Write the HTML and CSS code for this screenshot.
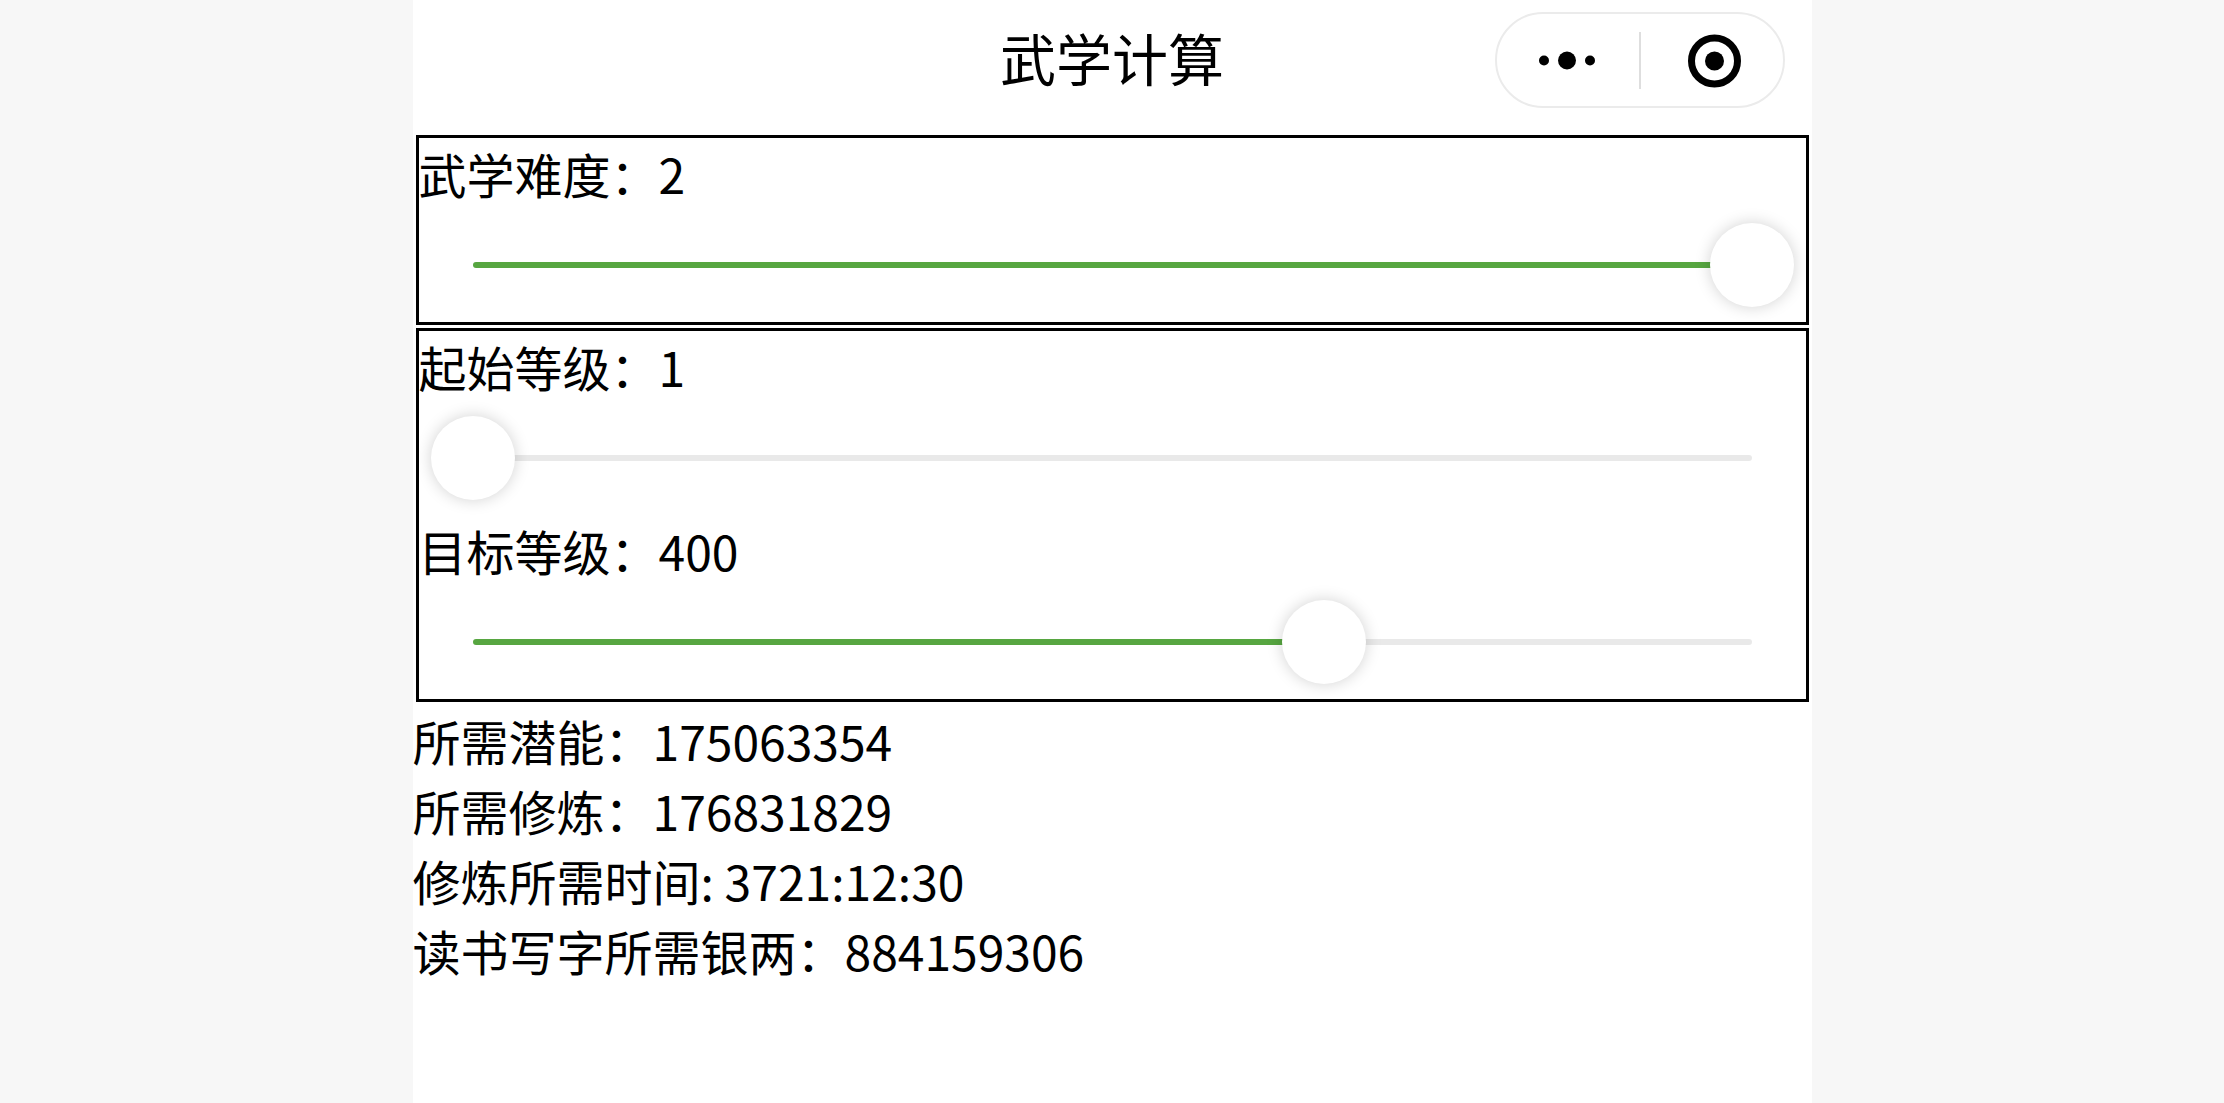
FILE: index.html
```html
<!DOCTYPE html>
<html lang="zh-CN">
<head>
    <meta charset="UTF-8">
    <meta name="viewport" content="width=device-width, initial-scale=1.0">
    <title>武学计算</title>
    <link rel="stylesheet" href="styles.css">
</head>
<body>
    <div class="page">
        <!-- 顶部导航 -->
        <header class="navbar">
            <h1 class="title">武学计算</h1>
            <div class="capsule">
                <button class="capsule-btn" type="button" aria-label="更多">
                    <svg width="60" height="60" viewBox="0 0 60 60">
                        <circle cx="6" cy="30.5" r="5"/>
                        <circle cx="29" cy="30.5" r="9"/>
                        <circle cx="52" cy="30.5" r="5"/>
                    </svg>
                </button>
                <span class="capsule-line"></span>
                <button class="capsule-btn" type="button" aria-label="关闭">
                    <svg width="60" height="60" viewBox="0 0 60 60">
                        <circle cx="32.5" cy="31" r="23" fill="none" stroke="#000" stroke-width="7"/>
                        <circle cx="32.5" cy="31" r="9.5"/>
                    </svg>
                </button>
            </div>
        </header>

        <!-- 武学难度 -->
        <section class="box">
            <label class="row" for="difficulty">武学难度：<span>2</span></label>
            <div class="slider" style="--fill: 100%">
                <input type="range" id="difficulty" min="0" max="2" value="2">
            </div>
        </section>

        <!-- 等级 -->
        <section class="box">
            <label class="row" for="start">起始等级：<span>1</span></label>
            <div class="slider" style="--fill: 0%">
                <input type="range" id="start" min="1" max="600" value="1">
            </div>
            <label class="row" for="target">目标等级：<span>400</span></label>
            <div class="slider" style="--fill: 66.6%">
                <input type="range" id="target" min="1" max="600" value="400">
            </div>
        </section>

        <!-- 计算结果 -->
        <section class="result">
            <div class="row">所需潜能：175063354</div>
            <div class="row">所需修炼：176831829</div>
            <div class="row">修炼所需时间: 3721:12:30</div>
            <div class="row">读书写字所需银两：884159306</div>
        </section>
    </div>

    <script>
        // 拖动时更新数值和进度
        document.querySelectorAll('.slider input').forEach(input => {
            input.addEventListener('input', () => {
                const percent = (input.value - input.min) / (input.max - input.min) * 100;
                input.parentNode.style.setProperty('--fill', percent + '%');
                input.labels[0].querySelector('span').textContent = input.value;
            });
        });
    </script>
</body>
</html>
```

FILE: styles.css
```css
* {
    box-sizing: border-box;
}

body {
    margin: 0;
    background: #f7f7f7;
    color: #000;
    font-family: "Noto Sans CJK SC", sans-serif;
    font-size: 48px;
    line-height: 70px;
}

.page {
    display: flex;
    flex-direction: column;
    gap: 3px;
    max-width: 1399px;
    min-height: 100vh;
    margin: 0 auto;
    background: #fff;
}

/* 顶部导航 */
.navbar {
    display: grid;
    grid-template-columns: 1fr auto 1fr;
    align-items: start;
    height: 132px;
    padding: 12px 27px;
}

.title {
    grid-column: 2;
    margin: 0;
    font-size: 56px;
    font-weight: normal;
    line-height: 90px;
}

.capsule {
    justify-self: end;
    display: flex;
    align-items: center;
    width: 290px;
    height: 96px;
    border: 2px solid #ebebeb;
    border-radius: 48px;
    background: #fff;
}

.capsule-btn {
    flex: 1;
    display: flex;
    justify-content: center;
    padding: 0;
    border: none;
    background: none;
    cursor: pointer;
}

.capsule-line {
    width: 2px;
    height: 57px;
    background: #dedede;
}

/* 带边框的区域 */
.box {
    margin: 0 3px;
    border: 3px solid #000;
}

.row {
    display: block;
}

/* 滑块 */
.slider {
    display: grid;
    align-items: center;
    height: 114px;
    margin: 0 54px;
}

.slider::before {
    content: "";
    grid-area: 1 / 1;
    height: 6px;
    border-radius: 3px;
    background: linear-gradient(to right, #57a641 var(--fill), #e9e9e9 var(--fill));
}

.slider input {
    -webkit-appearance: none;
    appearance: none;
    grid-area: 1 / 1;
    height: 84px;
    margin: 0 -42px;
    background: none;
    cursor: pointer;
}

.slider input::-webkit-slider-thumb {
    -webkit-appearance: none;
    width: 84px;
    height: 84px;
    border-radius: 50%;
    background: #fff;
    box-shadow: 0 0 16px rgba(0, 0, 0, 0.18);
}
```
